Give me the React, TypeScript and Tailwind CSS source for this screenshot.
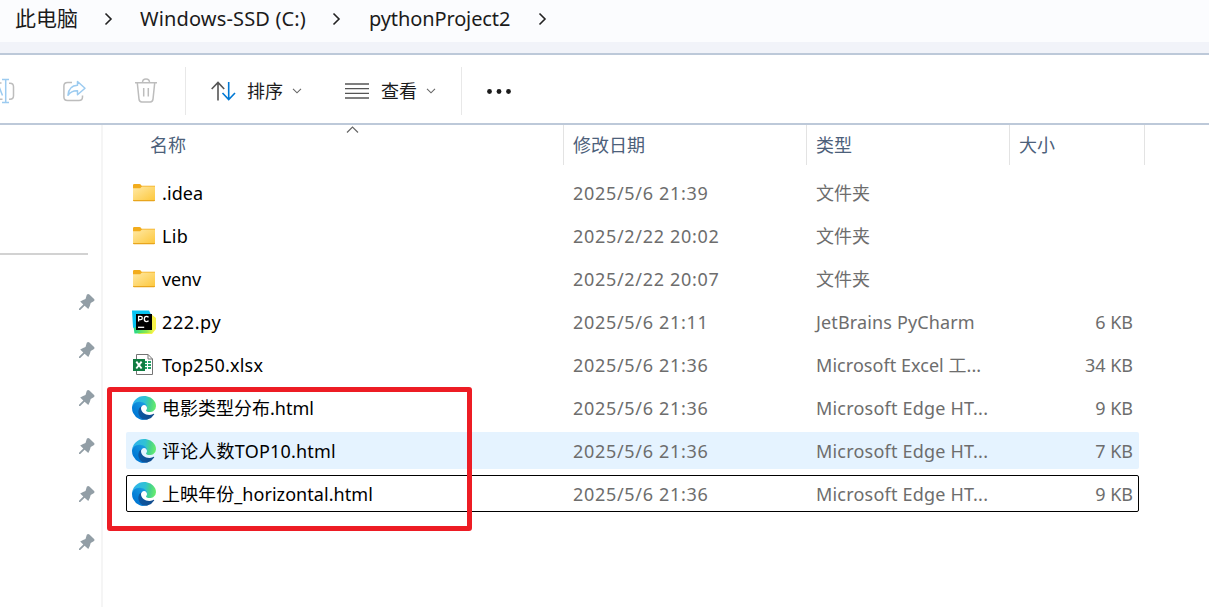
import type { ReactNode } from 'react';

type Kind = 'folder' | 'pycharm' | 'excel' | 'edge';

interface Entry {
  kind: Kind;
  name: string;
  nameClass: string;
  date: string;
  type: string;
  typeClass: string;
  size: string;
  rowClass: string;
}

const plain = 'border-transparent';

const entries: Entry[] = [
  { kind: 'folder', name: '.idea', nameClass: 'tracking-[0.1px]', date: '2025/5/6 21:39', type: '文件夹', typeClass: '', size: '', rowClass: plain },
  { kind: 'folder', name: 'Lib', nameClass: 'tracking-[0.3px]', date: '2025/2/22 20:02', type: '文件夹', typeClass: '', size: '', rowClass: plain },
  { kind: 'folder', name: 'venv', nameClass: 'tracking-[-0.15px]', date: '2025/2/22 20:07', type: '文件夹', typeClass: '', size: '', rowClass: plain },
  { kind: 'pycharm', name: '222.py', nameClass: 'tracking-[0.6px]', date: '2025/5/6 21:11', type: 'JetBrains PyCharm', typeClass: 'tracking-[0.14px]', size: '6 KB', rowClass: plain },
  { kind: 'excel', name: 'Top250.xlsx', nameClass: 'tracking-[0.22px]', date: '2025/5/6 21:36', type: 'Microsoft Excel 工...', typeClass: 'tracking-[0.05px]', size: '34 KB', rowClass: plain },
  { kind: 'edge', name: '电影类型分布.html', nameClass: '', date: '2025/5/6 21:36', type: 'Microsoft Edge HT...', typeClass: 'tracking-[0.2px]', size: '9 KB', rowClass: plain },
  { kind: 'edge', name: '评论人数TOP10.html', nameClass: 'tracking-[0.2px]', date: '2025/5/6 21:36', type: 'Microsoft Edge HT...', typeClass: 'tracking-[0.2px]', size: '7 KB', rowClass: 'border-transparent bg-[#e5f3ff]' },
  { kind: 'edge', name: '上映年份_horizontal.html', nameClass: 'tracking-[0.06px]', date: '2025/5/6 21:36', type: 'Microsoft Edge HT...', typeClass: 'tracking-[0.2px]', size: '9 KB', rowClass: 'border-black' },
];

function FolderIcon() {
  return (
    <svg width="24" height="24" viewBox="0 0 24 24">
      <defs>
        <linearGradient id="folder" x1="0" y1="0" x2="1" y2="1">
          <stop offset="0" stopColor="#ffe9a6" />
          <stop offset="1" stopColor="#fdc73a" />
        </linearGradient>
      </defs>
      <path d="M1 4.2q0-1.2 1.2-1.2h5.3q.7 0 1.2.6l.9 1.2H23v4H1z" fill="#f2ac1c" />
      <path d="M1 7.2h7.2l1.2-1.3q.3-.3.8-.3H23V19q0 1-1 1H2q-1 0-1-1z" fill="url(#folder)" />
      <path d="M1 19h22q0 1.2-1 1.2H2q-1 0-1-1.2z" fill="#e8a51d" />
    </svg>
  );
}

function PyCharmIcon() {
  return (
    <svg width="24" height="26" viewBox="0 0 24 26">
      <defs>
        <linearGradient id="pcGreen" x1="0" y1="0" x2="1" y2="0">
          <stop offset="0" stopColor="#21d789" />
          <stop offset="0.65" stopColor="#8fe84e" />
          <stop offset="1" stopColor="#fcf84a" />
        </linearGradient>
      </defs>
      <path d="M0 1.5h17l2 4-12 17-6-4z" fill="#07c3f2" />
      <path d="M19 5l5 4v11l-4 5H6z" fill="#f8f24a" />
      <path d="M2.5 24.5L1.7 19 14 13l8 6-2 5z" fill="url(#pcGreen)" />
      <rect x="4" y="5" width="16" height="16" fill="#000" />
      <g fill="none" stroke="#fff" strokeWidth="1.3">
        <path d="M6.6 12.6V7.4h2.1q1.6 0 1.6 1.6t-1.6 1.6H6.6" />
        <path d="M16.5 8.4q-.7-1-1.9-1-2.3 0-2.3 2.6t2.3 2.6q1.2 0 1.900-1" />
        <path d="M6 18.3h6.2" />
      </g>
    </svg>
  );
}

function ExcelIcon() {
  return (
    <svg width="24" height="24" viewBox="0 0 24 24">
      <path d="M4.5 1.5h11.6l4.4 4.5v15.5h-16z" fill="#fff" stroke="#747474" />
      <path d="M16 1.5v4.5h4.5" fill="none" stroke="#747474" />
      <path d="M13 8h2v2h-2zM16 8h3v2h-3zM13 11h2v2h-2zM16 11h3v2h-3zM13 14h2v2h-2zM16 14h3v2h-3z" fill="#21a366" />
      <rect x="1" y="6" width="12" height="12" fill="#107c41" />
      <path d="M4.3 8.7l5.3 6.8M9.6 8.7l-5.3 6.8" stroke="#fff" strokeWidth="1.9" />
    </svg>
  );
}

function EdgeIcon() {
  return (
    <svg width="24" height="24" viewBox="0 0 256 256">
      <defs>
        <linearGradient id="edgeDark" x1="63" y1="177" x2="241" y2="177" gradientUnits="userSpaceOnUse">
          <stop offset="0" stopColor="#0c59a4" />
          <stop offset="1" stopColor="#114a8b" />
        </linearGradient>
        <linearGradient id="edgeBlue" x1="157" y1="100" x2="46" y2="221" gradientUnits="userSpaceOnUse">
          <stop offset="0" stopColor="#1b9de2" />
          <stop offset="0.16" stopColor="#1595df" />
          <stop offset="0.67" stopColor="#0680d7" />
          <stop offset="1" stopColor="#0078d4" />
        </linearGradient>
        <linearGradient id="edgeTop" x1="20" y1="60" x2="250" y2="100" gradientUnits="userSpaceOnUse">
          <stop offset="0" stopColor="#2fb4ea" />
          <stop offset="0.5" stopColor="#30c2d4" />
          <stop offset="0.75" stopColor="#46d38c" />
          <stop offset="1" stopColor="#66eb6e" />
        </linearGradient>
      </defs>
      <path fill="url(#edgeDark)" d="M231 190.5a93.73 93.73 0 0 1-10.54 4.71 101.87 101.87 0 0 1-35.9 6.46c-47.32 0-88.54-32.55-88.54-74.32a31.48 31.48 0 0 1 16.43-27.31c-42.8 1.8-53.8 46.4-53.8 72.53 0 73.88 68.09 81.37 82.76 81.37 7.91 0 19.84-2.3 27-4.56l1.31-.44a128.34 128.34 0 0 0 66.6-52.8 4 4 0 0 0-5.32-5.64z" />
      <path fill="url(#edgeBlue)" d="M105.7 241.4a79.2 79.2 0 0 1-22.74-21.34 80.72 80.72 0 0 1 29.5-120c3.12-1.47 8.45-4.13 15.54-4a32.35 32.35 0 0 1 25.69 13 31.88 31.88 0 0 1 6.36 18.66c0-.21 24.46-79.6-80-79.6-43.9 0-80 41.66-80 78.21a130.15 130.15 0 0 0 12.11 56 128 128 0 0 0 156.38 67.11 75.55 75.55 0 0 1-62.84-8z" />
      <path fill="url(#edgeTop)" d="M152.3 148.9c-.81 1.05-3.3 2.5-3.3 5.66 0 2.61 1.7 5.12 4.72 7.23 14.38 10 41.49 8.68 41.56 8.68a59.56 59.56 0 0 0 30.27-8.35 61.38 61.38 0 0 0 30.43-52.88c.26-22.41-8-37.31-11.34-43.91C223.46 23.84 177.72 0 128 0A128 128 0 0 0 0 126.2c.48-36.54 36.8-66.05 80-66.05 3.5 0 23.46.34 42 10.07 16.34 8.58 24.9 18.94 30.85 29.21 6.18 10.67 7.28 24.15 7.28 29.52s-2.74 13.33-7.83 19.95z" />
    </svg>
  );
}

const icons: Record<Kind, ReactNode> = {
  folder: <FolderIcon />,
  pycharm: <PyCharmIcon />,
  excel: <ExcelIcon />,
  edge: <EdgeIcon />,
};

function Crumb() {
  return (
    <svg width="10" height="14" viewBox="0 0 10 14" fill="none" stroke="#222" strokeWidth="1.6">
      <path d="M1.5 1.5L7 7l-5.500 5.500" />
    </svg>
  );
}

function ChevronDown() {
  return (
    <svg width="10" height="6" viewBox="0 0 10 6" fill="none" stroke="#666" strokeWidth="1.1">
      <path d="M1 .8l4 4 4-4" />
    </svg>
  );
}

function Pin() {
  return (
    <svg width="18" height="18" viewBox="0 0 18 18" fill="#929ea6">
      <path d="M8.8 1.7Q10.2.5 11.4 1.6L16.3 6.3Q17.1 7.4 15.7 8.2L12.7 10 11.8 13 10.3 16 6.6 12.7 2.2 17.1 1 16.9 1 15.8 5.3 11.4 2.2 8.5 5.1 6.9 7.5 6z" />
    </svg>
  );
}

function Breadcrumb() {
  return (
    <div className="flex h-[42px] items-center bg-[#fbfcfe] pb-1 pl-[15px] text-xl text-[#1b1b1b]">
      <span className="w-[89px] text-[21px]">此电脑</span>
      <div className="w-9"><Crumb /></div>
      <span className="w-[192px] tracking-[0.15px]">Windows-SSD (C:)</span>
      <div className="w-[37px]"><Crumb /></div>
      <span className="w-[169px] tracking-[-0.12px]">pythonProject2</span>
      <Crumb />
    </div>
  );
}

function Toolbar() {
  return (
    <div className="flex h-[68px] items-center bg-white pt-[3px] text-lg text-[#1b1b1b]">
      <svg className="mr-[48px]" width="15" height="26" viewBox="0 0 15 26" fill="none" strokeWidth="1.5">
        <path d="M0 5h1.5M9 5.2h1q3.5 0 3.5 3.5v9q0 3.5-3.5 3.5H9M0 21.2h2.5" stroke="#bdbdbd" />
        <path d="M5.7 1.7v22.6M2 1.5h7M2 24.5h7M-1 8.5l3.5 9" stroke="#9ccbf0" />
      </svg>
      <svg className="mr-[47px]" width="24" height="26" viewBox="0 0 24 26" fill="none" strokeWidth="1.5">
        <path d="M9 4.5H4.5Q.9 4.5.9 8v11q0 3.5 3.6 3.5H16q3.5 0 3.5-3.5v-1.5" stroke="#bdbdbd" />
        <path d="M14.5 3.5l7.5 6.8-7.5 6.5v-4q-6-.3-9.5 4.5.7-9.500 9.500-10z" stroke="#9ccbf0" strokeLinejoin="round" />
      </svg>
      <svg className="mr-[27px]" width="24" height="26" viewBox="0 0 24 26" fill="none" stroke="#bdbdbd" strokeWidth="1.5">
        <path d="M1 4.8h22M8.5 4.5q0-3.5 3.5-3.5t3.5 3.5M3.3 5l1.7 16.2q.3 2.8 2.7 2.8h8.6q2.4 0 2.7-2.8L20.7 5M9.7 10v8.5M14.3 10v8.5" />
      </svg>
      <div className="mr-[25px] h-12 w-px bg-[#e8e8e8]" />
      <svg className="mr-[11px]" width="25" height="20" viewBox="0 0 25 20" fill="none" strokeWidth="1.6">
        <path d="M7 19.5V1.500M.7 8L7 1.5 13.2 8" stroke="#555" />
        <path d="M17.7 1v17.5M11.5 12l6.2 6.5 6.3-6.5" stroke="#0078d4" />
      </svg>
      <span className="mr-[9px] w-9">排序</span>
      <div className="mr-[43px]"><ChevronDown /></div>
      <svg className="mr-3" width="24" height="18" viewBox="0 0 24 18" stroke="#555" strokeWidth="1.3">
        <path d="M0 2h24M0 6.7h24M0 11.3h24M0 16h24" />
      </svg>
      <span className="mr-[9px] w-9">查看</span>
      <div className="mr-[25px]"><ChevronDown /></div>
      <div className="mr-[25px] h-12 w-px bg-[#e8e8e8]" />
      <svg width="26" height="6" viewBox="0 0 26 6" fill="#1b1b1b">
        <circle cx="2.5" cy="3.5" r="2.4" />
        <circle cx="12" cy="3.5" r="2.4" />
        <circle cx="21.5" cy="3.5" r="2.4" />
      </svg>
    </div>
  );
}

function Sidebar() {
  return (
    <div className="w-[103px] shrink-0 border-r-2 border-[#f5f5f5] pt-[128px]">
      <div className="h-[2px] w-[88px] bg-[#d2d2d2]" />
      <div className="flex flex-col gap-[30px] pt-[38px] pl-[78px]">
        {[0, 1, 2, 3, 4, 5].map((i) => (
          <Pin key={i} />
        ))}
      </div>
    </div>
  );
}

function ColumnHeader() {
  return (
    <div className="flex h-10 text-lg leading-10 text-[#4c607a]">
      <div className="relative w-[461px] border-r border-[#e3e3e3] pl-[47px]">
        名称
        <svg className="absolute top-[1px] left-[243px]" width="13" height="8" viewBox="0 0 13 8" fill="none" stroke="#666" strokeWidth="1.2">
          <path d="M1 6.5L6.5 1 12 6.5" />
        </svg>
      </div>
      <div className="w-[243px] border-r border-[#e3e3e3] pl-[9px]">修改日期</div>
      <div className="w-[203px] border-r border-[#e3e3e3] pl-[9px]">类型</div>
      <div className="w-[135px] border-r border-[#e3e3e3] pl-[9px]">大小</div>
    </div>
  );
}

function Row({ entry }: { entry: Entry }) {
  return (
    <div className={`flex h-[37px] w-[1013px] items-center rounded-[2px] border pr-[5px] pl-[5px] text-lg leading-none text-[#6d6d6d] ${entry.rowClass}`}>
      <div className="mr-[6px] w-6 shrink-0">{icons[entry.kind]}</div>
      <div className={`w-[411px] whitespace-nowrap text-black ${entry.nameClass}`}>{entry.name}</div>
      <div className="w-[243px] tracking-[0.69px] whitespace-nowrap">{entry.date}</div>
      <div className={`w-[203px] whitespace-nowrap ${entry.typeClass}`}>{entry.type}</div>
      <div className="flex-1 text-right">{entry.size}</div>
    </div>
  );
}

export default function App() {
  return (
    <div className="relative flex h-[607px] w-[1209px] flex-col overflow-hidden bg-white font-['Noto_Sans','Noto_Sans_CJK_SC',sans-serif]">
      <Breadcrumb />
      <div className="h-[13px] border-b-2 border-[#bdc9d9] bg-[#f1f3f9]" />
      <Toolbar />
      <div className="h-[2px] bg-[#bdc9d9]" />
      <div className="flex min-h-0 flex-1">
        <Sidebar />
        <div className="flex-1">
          <ColumnHeader />
          <div className="flex flex-col gap-[6px] pt-[9px] pl-[23px]">
            {entries.map((e) => (
              <Row key={e.name} entry={e} />
            ))}
          </div>
        </div>
      </div>
      <div className="absolute top-[387px] left-[107px] h-[144px] w-[365px] rounded-[3px] border-5 border-[#ed1c24]" />
    </div>
  );
}
